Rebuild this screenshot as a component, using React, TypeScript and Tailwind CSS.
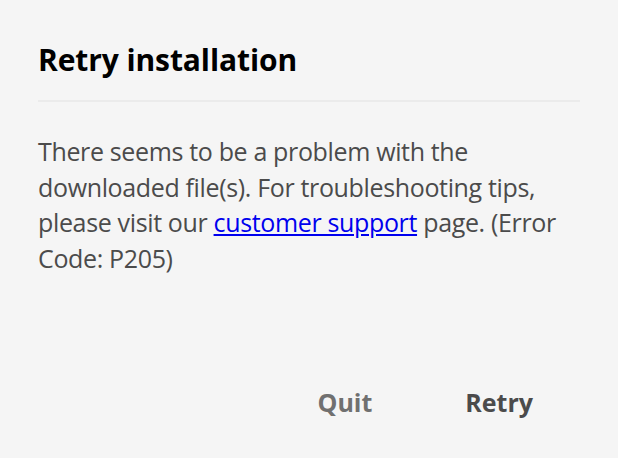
export default function App() {
  return (
    <main className="w-[618px] h-[458px] bg-[#f5f5f5] flex flex-col px-[38px] pt-[38px] pb-[37px] font-['Open_Sans',sans-serif]">
      <h1 className="text-[30px] leading-[44px] font-bold text-black tracking-[-0.1px]">
        Retry installation
      </h1>
      <div className="mt-[18px] h-[2px] bg-[#ebebeb]" />
      <p className="mt-[32px] text-[25px] leading-[35.5px] text-[#4b4b4b] tracking-[-0.35px]">
        There seems to be a problem with the downloaded file(s). For
        troubleshooting tips, please visit our{" "}
        <a href="#" className="text-[#0000ee] underline">
          customer support
        </a>{" "}
        page. (Error Code: P205)
      </p>
      <div className="mt-auto flex justify-end items-center gap-[93px] pr-[47px]">
        <button className="text-[25px] font-bold text-[#707070]">Quit</button>
        <button className="text-[25px] font-bold text-[#4b4b4b]">Retry</button>
      </div>
    </main>
  );
}
